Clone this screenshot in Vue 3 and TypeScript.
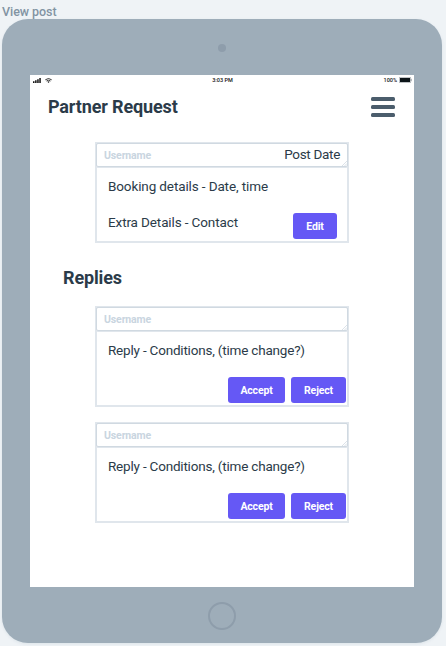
<script setup lang="ts">
interface Post {
  id: number
  kind: 'post' | 'reply'
  lines: string[]
  date?: string
  actions: string[]
}

const post: Post = {
  id: 1,
  kind: 'post',
  lines: ['Booking details - Date, time', 'Extra Details - Contact'],
  date: 'Post Date',
  actions: ['Edit'],
}

const replies: Post[] = [
  { id: 2, kind: 'reply', lines: ['Reply - Conditions, (time change?)'], actions: ['Accept', 'Reject'] },
  { id: 3, kind: 'reply', lines: ['Reply - Conditions, (time change?)'], actions: ['Accept', 'Reject'] },
]

const groups = [
  { title: '', posts: [post] },
  { title: 'Replies', posts: replies },
]
</script>

<template>
  <main class="board">
    <div class="label">View post</div>
    <div class="tablet">
      <div class="camera-row"><span class="camera"></span></div>
      <div class="screen">
        <div class="status">
          <div class="signal">
            <svg width="8" height="5" viewBox="0 0 8 5">
              <path d="M0 3.2h1.5V5H0zM2.1 2.3h1.5V5H2.1zM4.2 1.2h1.5V5H4.2zM6.3 0h1.5v5H6.3z" fill="#111" />
            </svg>
            <svg width="7" height="5" viewBox="0 0 7 5" fill="none" stroke="#222">
              <path d="M.3 1.8Q3.5-.8 6.7 1.8M1.5 3Q3.5 1.4 5.5 3" stroke-width=".9" />
              <path d="M2.4 3.7 3.5 5l1.1-1.3Q3.5 3 2.4 3.7z" fill="#222" stroke="none" />
            </svg>
          </div>
          <span class="time">3:03 PM</span>
          <div class="power">
            <span>100%</span>
            <svg width="13" height="6" viewBox="0 0 13 6">
              <rect x=".3" y=".3" width="11.4" height="5.4" rx=".8" fill="#fff" stroke="#7b8288" stroke-width=".6" />
              <rect x="1" y="1" width="10" height="4" fill="#0c1418" />
              <path d="M12.2 2v2" stroke="#7b8288" stroke-width=".7" />
            </svg>
          </div>
        </div>
        <header class="bar">
          <h1>Partner Request</h1>
          <div class="menu"><i></i><i></i><i></i></div>
        </header>
        <section v-for="(group, g) in groups" :key="g" class="group">
          <h2 v-if="group.title">{{ group.title }}</h2>
          <article v-for="item in group.posts" :key="item.id" class="card">
            <div class="head">
              <span class="user">Username</span>
              <span v-if="item.date" class="date">{{ item.date }}</span>
              <svg class="grip" width="6" height="6" viewBox="0 0 6 6">
                <path d="M1 6 6 1M3.5 6 6 3.5" stroke="#ccd6df" stroke-width=".7" />
              </svg>
            </div>
            <div class="body">
              <p v-for="(line, i) in item.lines" :key="i" :class="item.kind">{{ line }}</p>
            </div>
            <div class="actions" :class="item.kind">
              <button v-for="action in item.actions" :key="action" :class="action.toLowerCase()">{{ action }}</button>
            </div>
          </article>
        </section>
      </div>
      <div class="home-row"><span class="home"></span></div>
    </div>
  </main>
</template>

<style>
body {
  background: #eff3f6;
  overflow: hidden;
}
</style>

<style scoped>
* {
  box-sizing: border-box;
}
.board {
  width: 446px;
  height: 646px;
  background: #eff3f6;
  font-family: Roboto, "Liberation Sans", sans-serif;
  color: #2b3b49;
}
.label {
  height: 19px;
  padding: 4px 0 0 2px;
  font-size: 12.5px;
  line-height: 16px;
  letter-spacing: -0.05px;
  font-weight: 500;
  color: #8294a3;
}
.tablet {
  width: 440px;
  height: 624px;
  margin-left: 2px;
  padding: 0 28px;
  border-radius: 26px;
  background: #9eadb9;
  box-shadow: 0 1px 3px rgba(120, 145, 165, 0.15);
}
.camera-row {
  height: 56px;
  display: flex;
  justify-content: center;
  padding-top: 25px;
}
.camera {
  width: 8px;
  height: 8px;
  border-radius: 50%;
  background: #8e9dab;
}
.screen {
  width: 384px;
  height: 512px;
  background: #fff;
}
.home-row {
  height: 56px;
  display: flex;
  justify-content: center;
  padding-top: 15px;
}
.home {
  width: 28px;
  height: 28px;
  border: 2px solid #8e9dab;
  border-radius: 50%;
}
.status {
  height: 10px;
  display: grid;
  grid-template-columns: 1fr auto 1fr;
  align-items: center;
  padding: 0 2px 0 3px;
  font-size: 5.5px;
  font-weight: 500;
  line-height: 10px;
  color: #111;
}
.signal,
.power {
  display: flex;
  align-items: center;
  gap: 4px;
}
.power {
  justify-content: flex-end;
  gap: 2px;
}
.bar {
  height: 57px;
  display: flex;
  justify-content: space-between;
  padding: 12px 19px 0 18px;
}
h1,
h2 {
  margin: 0;
  font-size: 18px;
  line-height: 20px;
  font-weight: 700;
  letter-spacing: -0.14px;
}
.menu {
  width: 24px;
  display: flex;
  flex-direction: column;
  gap: 4px;
}
.menu i {
  height: 4px;
  border-radius: 1.5px;
  background: #4b5d6c;
}
h2 {
  height: 38px;
  margin: 25px 0 0 -32px;
}
.group {
  padding-left: 65px;
}
.card {
  width: 254px;
  height: 101px;
  border: 2px solid #e0e6ec;
  display: flex;
  flex-direction: column;
}
.card + .card {
  margin-top: 15px;
}
.head {
  height: 24px;
  margin: -1px -1px 0;
  flex: none;
  position: relative;
  display: flex;
  justify-content: space-between;
  padding: 0 7px;
  border: 1px solid #d0d9e1;
  border-radius: 2px;
  box-shadow: 0 1px #e0e6ec;
}
.user {
  font-size: 10.5px;
  line-height: 23px;
  font-weight: 700;
  letter-spacing: -0.12px;
  color: #c9d5df;
}
.date {
  font-size: 13.5px;
  line-height: 20px;
  letter-spacing: -0.32px;
}
.grip {
  position: absolute;
  right: 0;
  bottom: 0;
}
.body {
  flex: 1;
  padding: 11px 0 0 11px;
}
p {
  margin: 0 0 20px;
  font-size: 13.5px;
  line-height: 16px;
  letter-spacing: -0.12px;
  white-space: nowrap;
}
p.reply {
  letter-spacing: -0.2px;
}
.actions {
  display: flex;
  flex: none;
  justify-content: flex-end;
  gap: 6px;
  margin-top: -60px;
  padding: 0 1px 2px 0;
}
.actions.post {
  padding-right: 10px;
}
button {
  width: 55px;
  height: 26px;
  padding: 1px 0 0;
  border: 0;
  border-radius: 3px;
  background: #6558f5;
  color: #fff;
  font: 700 10.5px/25px Roboto, "Liberation Sans", sans-serif;
  letter-spacing: -0.15px;
}
.edit {
  width: 44px;
}
.accept {
  width: 57px;
}
</style>
